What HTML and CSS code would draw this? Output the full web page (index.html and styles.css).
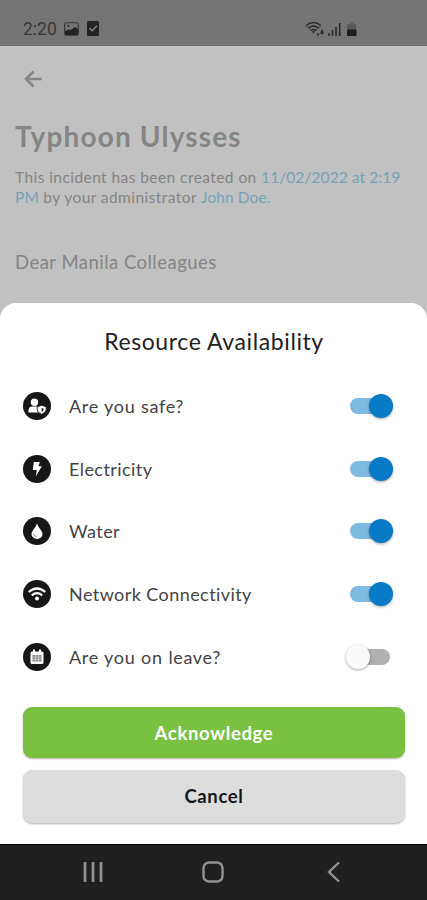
FILE: index.html
```html
<!DOCTYPE html>
<html lang="en">
  <head>
    <meta charset="utf-8">
    <meta name="viewport" content="width=device-width, initial-scale=1">
    <title>Resource Availability</title>
    <link rel="stylesheet" href="styles.css">
  </head>
  <body>
    <div class="status-bar">
      <span class="time">2:20</span>
      <svg class="status-image" width="15" height="14" viewBox="0 0 15 14">
        <rect x="0.7" y="0.7" width="13.6" height="12.6" rx="2" fill="none" stroke="#333" stroke-width="1.1"/>
        <path d="M1 12V9l3.500-1.500 2 .500L11 5l3 2v5q0 1-1 1H2q-1 0-1-1z" fill="#222"/>
        <circle cx="4.500" cy="4" r="1" fill="#222"/>
      </svg>
      <svg class="status-check" width="12" height="15" viewBox="0 0 12 15">
        <rect width="12" height="15" rx="1.500" fill="#222"/>
        <path d="M2.500 7l2.700 2.700L10 4.700" fill="none" stroke="#858585" stroke-width="1.400"/>
      </svg>
      <svg class="status-signal" width="53" height="16" viewBox="0 0 53 16">
        <g fill="none" stroke="#2c2c2c" stroke-width="1.300">
          <path d="M1 4.500q7.500-6 15 0M3.500 7q5-4 10 0M6 9.500q2.500-2 5 0"/>
          <path d="M1 4.500l7.500 7 7.500-7" stroke-width="0.800"/>
        </g>
        <path d="M7 10.500h3l-1.500 2zM11.500 12.500h3l-1.500 3zM15.500 11l1.500-3 1.500 3v2h-3z" fill="#2c2c2c"/>
        <path d="M24 15v-3M27.500 15V9M31 15V6M34.700 15V2" stroke="#2c2c2c" stroke-width="1.600"/>
        <path d="M43 3h2.500V1h3v2H51v6H42V4z" fill="#5b5b5b"/>
        <rect x="42" y="8.500" width="9.500" height="6.500" rx="1" fill="#1f1f1f"/>
      </svg>
    </div>

    <div class="incident">
      <svg class="back" width="18" height="18" viewBox="0 0 18 18">
        <path d="M9.500 1.500L2 9l7.500 7.500M2 9h15.500" fill="none" stroke="#858585" stroke-width="2.600"/>
      </svg>
      <h1>Typhoon Ulysses</h1>
      <p class="created">This incident has been created on <span class="link">11/02/2022 at 2:19</span><br><span class="link">PM</span> by your administrator <span class="link">John Doe.</span></p>
      <p class="greeting">Dear Manila Colleagues</p>
    </div>

    <div class="sheet">
      <h2>Resource Availability</h2>
      <div class="resources">
        <div class="resource">
          <svg class="icon" viewBox="0 0 28 28">
            <circle cx="14" cy="14" r="14" fill="#171717"/>
            <circle cx="11.500" cy="10.200" r="3.700" fill="#fff"/>
            <path d="M5.500 20.500v-2q0-4 4-4h4.500q2 0 3 1.500v4.500z" fill="#fff"/>
            <path d="M18.700 13.300l4.500 1.500v3q0 2.700-4.500 4.500-4.500-1.800-4.500-4.500v-3z" fill="#fff" stroke="#171717" stroke-width="0.900"/>
            <path d="M18.700 16v4q2-1 2-3.300z" fill="#171717"/>
          </svg>
          <span class="label question">Are you safe?</span>
          <span class="switch on"></span>
        </div>
        <div class="resource">
          <svg class="icon" viewBox="0 0 28 28">
            <circle cx="14" cy="14" r="14" fill="#171717"/>
            <path d="M10.800 7h6l-1.300 4.300h3.300L12.800 21.500l1-6.500h-4z" fill="#fff"/>
          </svg>
          <span class="label">Electricity</span>
          <span class="switch on"></span>
        </div>
        <div class="resource">
          <svg class="icon" viewBox="0 0 28 28">
            <circle cx="14" cy="14" r="14" fill="#171717"/>
            <path d="M14 6.500q1 3 3.500 6 2 2.500 2 4.500a5.500 5 0 0 1-11 0q0-2 2-4.500 2.500-3 3.500-6z" fill="#fff"/>
            <path d="M10.700 17q.3 2.200 2.800 2.700" fill="none" stroke="#777" stroke-width="0.800"/>
          </svg>
          <span class="label">Water</span>
          <span class="switch on"></span>
        </div>
        <div class="resource">
          <svg class="icon" viewBox="0 0 28 28">
            <circle cx="14" cy="14" r="14" fill="#171717"/>
            <path d="M5.700 12q8.300-7 16.600 0M8.800 15.300q5.200-4.200 10.400 0" fill="none" stroke="#fff" stroke-width="2.200"/>
            <circle cx="14" cy="18.500" r="2" fill="#fff"/>
          </svg>
          <span class="label">Network Connectivity</span>
          <span class="switch on"></span>
        </div>
        <div class="resource">
          <svg class="icon" viewBox="0 0 28 28">
            <circle cx="14" cy="14" r="14" fill="#171717"/>
            <path d="M9 8.500h1v-2h2v2h4v-2h2v2h1q1.500 0 1.500 1.500v9.500q0 1.500-1.500 1.500H9q-1.500 0-1.500-1.500V10q0-1.500 1.500-1.500z" fill="#fff"/>
            <path d="M9.500 12h9v6.500h-9z" fill="#888"/>
            <path d="M9.500 14.200h9M9.500 16.400h9M12.500 12v6.500M15.500 12v6.500" stroke="#ddd" stroke-width="0.700"/>
          </svg>
          <span class="label question">Are you on leave?</span>
          <span class="switch"></span>
        </div>
      </div>
      <button class="acknowledge">Acknowledge</button>
      <button class="cancel">Cancel</button>
    </div>

    <div class="nav-bar">
      <svg width="22" height="22" viewBox="0 0 22 22">
        <path d="M3 1v20M11 1v20M19 1v20" stroke="#929292" stroke-width="2.700"/>
      </svg>
      <svg width="22" height="22" viewBox="0 0 22 22">
        <rect x="1.500" y="1.500" width="19" height="19" rx="5.500" fill="none" stroke="#929292" stroke-width="2.400"/>
      </svg>
      <svg width="22" height="22" viewBox="0 0 22 22">
        <path d="M17 1.500L7 11l10 9.500" fill="none" stroke="#929292" stroke-width="2.400"/>
      </svg>
    </div>
  </body>
</html>
```

FILE: styles.css
```css
* {
  box-sizing: border-box;
}
body {
  display: flex;
  flex-direction: column;
  height: 900px;
  margin: 0;
  background-color: #c1c1c1;
  font-family: Lato, "Open Sans", sans-serif;
}
h1, h2, p {
  margin: 0;
  white-space: nowrap;
}
svg {
  display: block;
  flex: none;
}
.status-bar {
  display: flex;
  align-items: center;
  height: 46px;
  padding: 12px 69px 0 23px;
  background-color: #757575;
  border-bottom: 1px solid #6c6c6c;
}
.time {
  width: 41px;
  color: #383838;
  font-family: Roboto, sans-serif;
  font-size: 17.5px;
}
.status-check {
  margin-left: 8px;
}
.status-signal {
  margin-left: auto;
}
.incident {
  height: 257px;
  padding: 24px 15px 0;
  color: #858585;
}
.back {
  margin-left: 9px;
}
h1 {
  margin-top: 30px;
  font-size: 28px;
  line-height: 36px;
  letter-spacing: 1.15px;
}
.created {
  margin-top: 13px;
  font-size: 15.5px;
  line-height: 20px;
  letter-spacing: 0.43px;
}
.link {
  color: #77a3b8;
  letter-spacing: 0.08px;
}
.greeting {
  margin-top: 42px;
  font-size: 18.5px;
  line-height: 26px;
  letter-spacing: 0.48px;
}
.sheet {
  display: flex;
  flex-direction: column;
  height: 541px;
  padding: 22px 22px 0 23px;
  background-color: #fff;
  border-radius: 16px 16px 0 0;
}
h2 {
  color: #222;
  font-size: 23px;
  font-weight: 400;
  line-height: 32px;
  letter-spacing: 0.6px;
  text-align: center;
}
.resources {
  margin-top: 18px;
}
.resource {
  display: flex;
  align-items: center;
  height: 62.6px;
}
.icon {
  width: 28px;
  height: 28px;
}
.label {
  flex: 1;
  margin-left: 18px;
  color: #444;
  font-size: 18px;
  letter-spacing: 0.43px;
}
.label.question {
  letter-spacing: 0.65px;
  word-spacing: 0.5px;
}
.switch {
  position: relative;
  width: 40px;
  height: 16px;
  margin-right: 15px;
  background-color: #b0b0b0;
  border-radius: 8px;
}
.switch::after {
  content: "";
  position: absolute;
  top: -4px;
  left: -4px;
  width: 24px;
  height: 24px;
  background-color: #fafafa;
  border-radius: 50%;
  box-shadow: 0 1px 3px rgba(0, 0, 0, 0.35);
}
.switch.on {
  background-color: #7fbbe1;
}
.switch.on::after {
  left: 19px;
  background-color: #077bc5;
}
button {
  border: 0;
  border-radius: 9px;
  font-family: inherit;
  font-size: 18.5px;
  font-weight: 700;
  letter-spacing: 0.65px;
  box-shadow: 0 1px 2px rgba(0, 0, 0, 0.3);
}
.acknowledge {
  height: 51px;
  margin-top: 19px;
  padding-top: 3px;
  background-color: #7ac142;
  color: #fff;
}
.cancel {
  height: 53px;
  margin-top: 12px;
  background-color: #ddd;
  color: #171717;
}
.nav-bar {
  display: flex;
  align-items: center;
  justify-content: space-between;
  height: 56px;
  padding: 0 83px 2px 82px;
  background-color: #1f1f1f;
  border-top: 1px solid #000;
}
```
